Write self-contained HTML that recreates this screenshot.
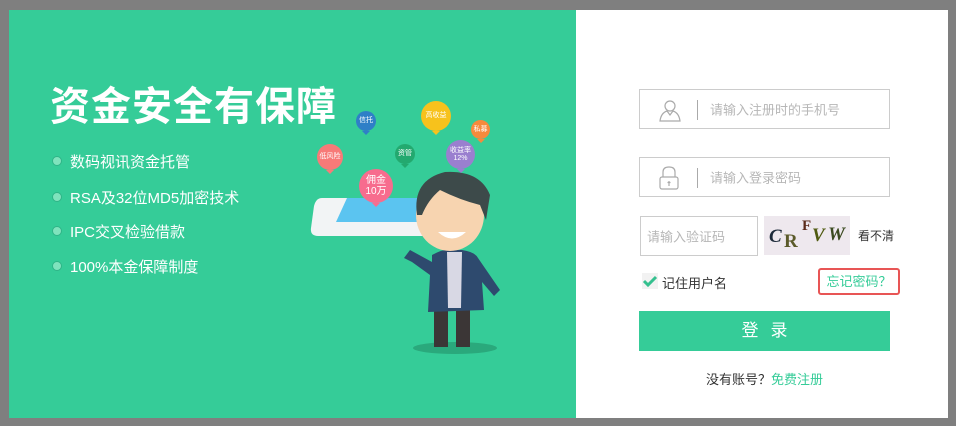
<!DOCTYPE html>
<html><head><meta charset="utf-8"><style>
*{margin:0;padding:0;box-sizing:border-box}
body{width:956px;height:426px;background:#7f7f7f;position:relative;overflow:hidden;font-family:"Liberation Sans","Noto Sans CJK SC",sans-serif}
.g{position:absolute;left:9px;top:10px;width:567px;height:408px;background:#35cc98}
.w{position:absolute;left:576px;top:10px;width:372px;height:408px;background:#fff}
.a{position:absolute}
h1{position:absolute;left:50px;top:82px;font-size:40px;color:#fff;font-weight:bold;letter-spacing:1px;white-space:nowrap;line-height:50px}
.li{position:absolute;left:52px;color:#fff;font-size:15px;white-space:nowrap;line-height:20px}
.li:before{content:"";display:inline-block;width:8px;height:8px;border-radius:50%;background:#7fe3bd;border:1px solid #2fb487;margin-right:8px;vertical-align:1px}
.inp{position:absolute;border:1px solid #ccc;background:#fff;color:#b7b7b7;font-size:13px}
.inp span{position:absolute;top:50%;transform:translateY(-50%);white-space:nowrap}
.bub{position:absolute;border-radius:50%;color:#fff;font-size:7px;text-align:center;display:flex;align-items:center;justify-content:center;line-height:1.1}
.bub:after{content:"";position:absolute;bottom:-4px;left:50%;margin-left:-4px;border:4px solid transparent;border-top-color:inherit;border-bottom:0}
</style></head><body>
<div class="g"></div><div class="w"></div>
<h1>资金安全有保障</h1>
<div class="li" style="top:153px">数码视讯资金托管</div>
<div class="li" style="top:189px">RSA及32位MD5加密技术</div>
<div class="li" style="top:223px">IPC交叉检验借款</div>
<div class="li" style="top:258px">100%本金保障制度</div>

<svg class="a" style="left:300px;top:160px" width="220" height="200" viewBox="300 160 220 200">
 <path d="M322 198 L420 198 Q430 198 430 206 L430 230 Q430 236 422 236 L318 236 Q310 236 311 228 L314 206 Q316 198 322 198Z" fill="#f2f4f5"/>
 <path d="M347 198 L420 198 L418 222 L336 222Z" fill="#5bc4f0"/>
 <ellipse cx="455" cy="348" rx="42" ry="6" fill="#2aa97c"/>
 <rect x="434" y="305" width="14" height="42" fill="#3b3636"/><rect x="456" y="305" width="14" height="42" fill="#3b3636"/>
 <path d="M432 255 Q445 248 452 250 L462 250 Q475 252 478 258 L500 290 L494 296 L482 282 L484 310 L428 312 L430 275 L412 262 L404 258 L410 250 L432 262Z" fill="#2e4a6e"/>
 <path d="M447 252 L462 252 L461 308 L448 308Z" fill="#d8d8e4"/>
 <ellipse cx="450" cy="215" rx="34" ry="36" fill="#f7d4b0"/>
 <path d="M417 215 Q412 180 445 172 Q480 170 490 195 L486 220 L480 205 Q460 200 440 190 Q428 200 422 215Z" fill="#3d4a4a"/>
 <path d="M438 232 Q452 245 466 232Z" fill="#fff"/>
</svg>
<div class="bub" style="left:356px;top:111px;width:20px;height:20px;background:#2f7fc7;border-top-color:#2f7fc7">信托</div>
<div class="bub" style="left:421px;top:101px;width:30px;height:30px;background:#f7c21c;border-top-color:#f7c21c">高收益</div>
<div class="bub" style="left:471px;top:120px;width:19px;height:19px;background:#f58a3c;border-top-color:#f58a3c">私募</div>
<div class="bub" style="left:317px;top:144px;width:26px;height:26px;background:#f77a78;border-top-color:#f77a78">低风险</div>
<div class="bub" style="left:395px;top:144px;width:20px;height:20px;background:#23a96f;border-top-color:#23a96f">资管</div>
<div class="bub" style="left:446px;top:140px;width:29px;height:29px;background:#9a7fcf;border-top-color:#9a7fcf">收益率<br>12%</div>
<div class="bub" style="left:359px;top:169px;width:34px;height:34px;background:#f76c8e;border-top-color:#f76c8e;font-size:10px">佣金<br>10万</div>

<div class="inp" style="left:639px;top:89px;width:251px;height:40px">
 <svg class="a" style="left:18px;top:8px" width="24" height="24" viewBox="0 0 24 24" fill="none" stroke="#aaa" stroke-width="1.2"><circle cx="12" cy="8" r="5"/><path d="M2 23 Q3 15 9 13 L12 17 L15 13 Q21 15 22 23Z"/></svg>
 <div class="a" style="left:57px;top:10px;width:1px;height:20px;background:#aaa"></div>
 <span style="left:70px">请输入注册时的手机号</span></div>
<div class="inp" style="left:639px;top:157px;width:251px;height:40px">
 <svg class="a" style="left:18px;top:7px" width="22" height="26" viewBox="0 0 22 26" fill="none" stroke="#aaa" stroke-width="1.2"><path d="M5 12 V7 Q5 2 11 2 Q17 2 17 7 V12"/><rect x="2" y="12" width="18" height="12" rx="2"/><path d="M11 16 V21 M9.5 17.5 H12.5"/></svg>
 <div class="a" style="left:57px;top:10px;width:1px;height:20px;background:#aaa"></div>
 <span style="left:70px">请输入登录密码</span></div>
<div class="inp" style="left:640px;top:216px;width:118px;height:40px"><span style="left:6px">请输入验证码</span></div>
<div class="a" style="left:764px;top:216px;width:86px;height:39px;background:#eee8ee;font-family:'Liberation Serif',serif;font-weight:bold;font-size:19px">
 <span class="a" style="left:5px;top:10px;color:#1d2a3a;font-style:italic">C</span>
 <span class="a" style="left:20px;top:15px;color:#5b5a2a">R</span>
 <span class="a" style="left:38px;top:2px;color:#5b2a1a;font-size:15px">F</span>
 <span class="a" style="left:48px;top:9px;color:#4f5a10;font-style:italic">V</span>
 <span class="a" style="left:64px;top:8px;color:#3b4a20;font-style:italic">W</span></div>
<div class="a" style="left:858px;top:227px;font-size:12px;color:#333">看不清</div>
<svg class="a" style="left:642px;top:273px" width="16" height="16"><rect width="16" height="16" fill="#f2f2f2"/><path d="M2 8 L6 12 L14 4" stroke="#35c08f" stroke-width="3" fill="none"/></svg>
<div class="a" style="left:662px;top:273px;font-size:13px;color:#333">记住用户名</div>
<div class="a" style="left:818px;top:268px;width:82px;height:27px;border:2px solid #e85555;border-radius:3px;font-size:13px;line-height:23px;text-align:center"><span style="color:#35cc98">忘记密码？</span></div>
<div class="a" style="left:639px;top:311px;width:251px;height:40px;background:#35cc98;color:#fff;font-size:17px;line-height:40px;text-align:center;letter-spacing:12px;text-indent:12px">登录</div>
<div class="a" style="left:706px;top:369px;font-size:13px;color:#333">没有账号？<span style="color:#35cc98">免费注册</span></div>
</body></html>
